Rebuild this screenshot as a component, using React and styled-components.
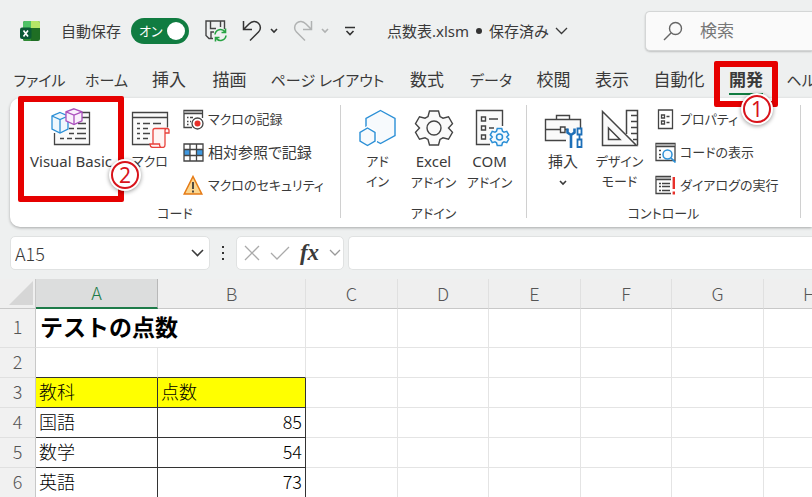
import React from 'react'
import styled, { createGlobalStyle } from 'styled-components'

const tabs = [
  { label: 'ファイル', width: 71, kana: true },
  { label: 'ホーム', width: 63, kana: true },
  { label: '挿入', width: 62 },
  { label: '描画', width: 59 },
  { label: 'ページ レイアウト', width: 137, kana: true },
  { label: '数式', width: 62 },
  { label: 'データ', width: 66, kana: true },
  { label: '校閲', width: 59 },
  { label: '表示', width: 58 },
  { label: '自動化', width: 76 },
  { label: '開発', width: 58, active: true, step: 1 },
  { label: 'ヘルプ', width: 66, kana: true },
]

const columns = [
  { name: 'A', width: 122 },
  { name: 'B', width: 148 },
  { name: 'C', width: 92 },
  { name: 'D', width: 91 },
  { name: 'E', width: 92 },
  { name: 'F', width: 91 },
  { name: 'G', width: 92 },
  { name: 'H', width: 92 },
]

const scores = [
  { subject: '国語', score: 85 },
  { subject: '数学', score: 54 },
  { subject: '英語', score: 73 },
]

function App() {
  return (
    <Page>
      <GlobalStyle />
      <TitleBar />
      <Tabs>
        {tabs.map((tab) => (
          <Tab key={tab.label} $width={tab.width} $active={tab.active} $kana={tab.kana}>
            <span>{tab.label}</span>
            {tab.step && (
              <TabCallout>
                <Badge>{tab.step}</Badge>
              </TabCallout>
            )}
          </Tab>
        ))}
      </Tabs>
      <Ribbon />
      <FormulaBar />
      <Sheet />
    </Page>
  )
}

export default App

function TitleBar() {
  return (
    <Header>
      <ExcelLogo />
      <AutoSave>
        自動保存
        <Switch type='checkbox' role='switch' defaultChecked />
        <Track>
          オン
          <Knob />
        </Track>
      </AutoSave>
      <QuickTools>
        <PlainButton aria-label='保存'>
          <SaveIcon />
        </PlainButton>
        <SplitButton aria-label='元に戻す'>
          <UndoIcon />
          <Chevron size={8} weight={1.6} />
        </SplitButton>
        <SplitButton aria-label='やり直し' $muted>
          <UndoIcon flip />
          <Chevron size={8} weight={1.6} />
        </SplitButton>
        <PlainButton aria-label='クイック アクセス ツール バーのカスタマイズ'>
          <svg width='12' height='12' fill='none' stroke='#333' strokeWidth='1.6'>
            <path d='M1 2.5h10M2.5 6L6 9.5 9.5 6' />
          </svg>
        </PlainButton>
      </QuickTools>
      <FileName>
        <span>点数表.xlsm</span>
        <Dot />
        <span>保存済み</span>
        <Chevron size={13} />
      </FileName>
      <SearchBox>
        <svg width='20' height='20' fill='none' stroke='#666' strokeWidth='1.4'>
          <circle cx='12.5' cy='7.5' r='6' />
          <path d='M8 12l-7 7' />
        </svg>
        <SearchInput type='search' placeholder='検索' aria-label='検索' />
      </SearchBox>
    </Header>
  )
}

function Ribbon() {
  return (
    <RibbonPanel>
      <Group $width={330}>
        <Tools>
          <BigButton $width={122}>
            <VisualBasicIcon />
            Visual Basic
            <ButtonCallout>
              <Badge>2</Badge>
            </ButtonCallout>
          </BigButton>
          <BigButton $width={36} $kana>
            <MacroIcon />
            マクロ
          </BigButton>
          <List>
            <SmallButton $kana>
              <RecordIcon />
              マクロの記録
            </SmallButton>
            <SmallButton>
              <RelativeIcon />
              相対参照で記録
            </SmallButton>
            <SmallButton $kana>
              <WarningIcon />
              マクロのセキュリティ
            </SmallButton>
          </List>
        </Tools>
        <GroupName>コード</GroupName>
      </Group>
      <Divider />
      <Group $width={185}>
        <Tools $center>
          <BigButton $width={56} $kana>
            <AddinIcon />
            <span>
              アド
              <br />
              イン
            </span>
          </BigButton>
          <BigButton $width={56}>
            <GearIcon />
            <span>
              Excel
              <br />
              <Kana>アドイン</Kana>
            </span>
          </BigButton>
          <BigButton $width={56}>
            <ComIcon />
            <span>
              COM
              <br />
              <Kana>アドイン</Kana>
            </span>
          </BigButton>
        </Tools>
        <GroupName>アドイン</GroupName>
      </Group>
      <Divider />
      <Group $width={273}>
        <Tools>
          <BigButton $width={72}>
            <InsertIcon />
            <span>
              挿入
              <br />
              <Chevron size={8} weight={1.6} />
            </span>
          </BigButton>
          <BigButton $width={41} $kana>
            <DesignIcon />
            <span>
              デザイン
              <br />
              モード
            </span>
          </BigButton>
          <List>
            <SmallButton $kana>
              <PropertyIcon />
              プロパティ
            </SmallButton>
            <SmallButton $kana>
              <CodeIcon />
              コードの表示
            </SmallButton>
            <SmallButton $kana>
              <DialogIcon />
              ダイアログの実行
            </SmallButton>
          </List>
        </Tools>
        <GroupName>コントロール</GroupName>
      </Group>
      <Divider />
    </RibbonPanel>
  )
}

function FormulaBar() {
  return (
    <Bar>
      <NameBox>
        <NameInput defaultValue='A15' aria-label='名前ボックス' />
        <PlainButton aria-label='名前の一覧'>
          <Chevron size={13} weight={1.6} />
        </PlainButton>
      </NameBox>
      <svg width='26' height='16' fill='#333'>
        <path d='M12 1h2v2h-2zM12 7h2v2h-2zM12 13h2v2h-2z' />
      </svg>
      <FormulaTools>
        <PlainButton aria-label='キャンセル'>
          <svg width='16' height='16' fill='none' stroke='#aaa' strokeWidth='1.3'>
            <path d='M1 1l14 14M15 1L1 15' />
          </svg>
        </PlainButton>
        <PlainButton aria-label='入力'>
          <svg width='20' height='16' fill='none' stroke='#aaa' strokeWidth='1.3'>
            <path d='M1 8l6 6L19 2' />
          </svg>
        </PlainButton>
        <FxButton aria-label='関数の挿入'>fx</FxButton>
        <Muted>
          <Chevron size={12} />
        </Muted>
      </FormulaTools>
      <FormulaInput aria-label='数式バー' />
    </Bar>
  )
}

function Sheet() {
  const rest = columns.slice(2)
  const blanks = rest.map((c) => <Cell key={c.name} />)

  return (
    <SheetArea>
      <Table>
        <colgroup>
          <Col $width={36} />
          {columns.map((c) => (
            <Col key={c.name} $width={c.width} />
          ))}
        </colgroup>
        <thead>
          <tr>
            <Corner aria-label='すべて選択'>
              <svg width='25' height='25' fill='#d6d6d6'>
                <path d='M24 0v24H0z' />
              </svg>
            </Corner>
            {columns.map((c) => (
              <ColumnHead key={c.name} scope='col' $selected={c.name === 'A'}>
                {c.name}
              </ColumnHead>
            ))}
          </tr>
        </thead>
        <tbody>
          <Row $height={39}>
            <RowHead scope='row'>1</RowHead>
            <TitleCell colSpan={2}>テストの点数</TitleCell>
            {blanks}
          </Row>
          <Row $height={30}>
            <RowHead scope='row'>2</RowHead>
            <Cell $above />
            <Cell $above />
            {blanks}
          </Row>
          <Row $height={30}>
            <RowHead scope='row'>3</RowHead>
            <Cell $boxed $fill>教科</Cell>
            <Cell $boxed $fill>点数</Cell>
            {blanks}
          </Row>
          {scores.map((row, i) => (
            <Row key={row.subject} $height={30}>
              <RowHead scope='row'>{i + 4}</RowHead>
              <Cell $boxed>{row.subject}</Cell>
              <Cell $boxed $number>{row.score}</Cell>
              {blanks}
            </Row>
          ))}
        </tbody>
      </Table>
    </SheetArea>
  )
}

// Icons

function Chevron({ size, weight = 1.3 }) {
  const h = size / 2
  return (
    <svg width={size} height={h + 2} fill='none' stroke='currentColor' strokeWidth={weight}>
      <path d={`M1 1l${h - 1} ${h - 1}l${h - 1} ${1 - h}`} />
    </svg>
  )
}

function ExcelLogo() {
  return (
    <svg width='20' height='20' role='img' aria-label='Excel'>
      <rect x='3' width='17' height='20' rx='2' fill='#1f6e24' />
      <path d='M5 0h6v7H3V2a2 2 0 0 1 2-2z' fill='#4fc267' />
      <path d='M11 0h7a2 2 0 0 1 2 2v5h-9z' fill='#b5e667' />
      <path d='M3 7h8v13H5a2 2 0 0 1-2-2z' fill='#2f8b34' />
      <rect y='6.5' width='11.5' height='11.5' rx='2' fill='#0b5a35' />
      <path d='M3.5 9.5l4.5 6M8 9.5l-4.5 6' stroke='#fff' strokeWidth='1.7' />
    </svg>
  )
}

function SaveIcon() {
  return (
    <svg width='22' height='22' fill='none' stroke='#444' strokeWidth='1.4'>
      <path d='M8 18.5H4L1 15.5V1h18.500v8M5.500 1v7.500H11M15.500 1v6M6 18v-6h3' />
      <g stroke='#27a343' strokeWidth='1.6'>
        <path d='M10 14.500a5.500 5.500 0 0 1 10-2.500M20.500 8.500v4h-4M21 15.500a5.500 5.500 0 0 1-10 2.500M10.500 21.500v-4h4' />
      </g>
    </svg>
  )
}

function UndoIcon({ flip }) {
  return (
    <svg width='20' height='22' fill='none' stroke='currentColor' strokeWidth='1.5'>
      <path
        transform={flip ? 'matrix(-1 0 0 1 20 0)' : undefined}
        d='M1.5 1v8.500H10M1.500 9.500L7 4C10 1 14 .8 16.500 3.300S19 9.500 16.500 12L8 20.500'
      />
    </svg>
  )
}

function VisualBasicIcon() {
  return (
    <svg width='40' height='40' fill='none' stroke='#444' strokeWidth='1.3'>
      <path d='M3.5 5h35v31h-35z' fill='#fafafa' stroke='none' />
      <path d='M31 4.5h7.500v32h-35V25M31 9.500h7.500' />
      <path d='M27 15.500h8M18 20.500h5M26 20.500h9M18 25.500h5M26 25.500h9M9 30.500h4M16 30.500h5M24 30.500h11' />
      <path d='M9 4.500l8 3.500v13l-8 4-8-4V8z' fill='#eef7fd' stroke='#2b8fd6' />
      <path d='M1 8l8 3.500L17 8M9 11.500V25' stroke='#2b8fd6' />
      <path d='M23 .8l8 3v9l-8 3.700-8-3.700v-9z' fill='#faf0fc' stroke='#ab50bd' />
      <path d='M15 3.800l8 3.200 8-3.200M23 7v9.500' stroke='#ab50bd' />
    </svg>
  )
}

function MacroIcon() {
  return (
    <svg width='40' height='40' fill='none' stroke='#444' strokeWidth='1.3'>
      <path d='M20 36.5H2.500v-32h35v15M2.500 9.500h35' fill='#fafafa' />
      <path d='M7 15.500h3M13 15.500h7M23 15.500h8M7 20.500h3M13 20.500h5M7 25.500h3M13 25.500h7M7 30.500h3M13 30.500h5' />
      <path
        d='M23 36V22.500q0-2 2-2h12q2 0 2 2V25h-4v12q0 2.500-2.500 2.500h-10Q20 39 20 36h9.500q0 3.500 3 3.500M35 25v-2.500q0-2 2-2'
        fill='#fff5f4'
        stroke='#e8423c'
      />
    </svg>
  )
}

function RecordIcon() {
  return (
    <svg width='21' height='21' fill='none' stroke='#444' strokeWidth='1.3'>
      <path d='M9 18.500H1v-17h18.500V9M1 4.500h18.500' />
      <path d='M1.500 2h17.500v2H1.500z' fill='#aaa' stroke='none' />
      <path d='M4 8.500h1.500M7 8.500h3M4 12.500h1.500M7 12.500h1M4 15.500h1.500' />
      <circle cx='14.5' cy='14.5' r='5.5' fill='#fff' />
      <circle cx='14.5' cy='14.5' r='3' fill='#e8312b' stroke='none' />
    </svg>
  )
}

function RelativeIcon() {
  return (
    <svg width='21' height='19' fill='none' stroke='#444' strokeWidth='1.3'>
      <path d='M1 6.500h6v6H1zM14 6.500h6v6h-6z' fill='#3f98e0' stroke='none' />
      <path d='M1 1h19v17H1zM1 6.500h19M1 12.500h19M7 1v17M13.500 1v17' />
    </svg>
  )
}

function WarningIcon() {
  return (
    <svg width='21' height='21' fill='none'>
      <path d='M10 1.500l8.800 17.500H1.200z' fill='#fbd58e' stroke='#e57a14' strokeWidth='1.5' />
      <path d='M10 7v7M10 15.500v2' stroke='#333' strokeWidth='1.7' />
    </svg>
  )
}

function AddinIcon() {
  return (
    <svg width='40' height='40' fill='#f7fafd' stroke='#2b8fd6' strokeWidth='1.4'>
      <path d='M22.500 2.500l14.500 8v17l-14.500 8L8 27.500v-17z' />
      <path d='M9.500 20l7.500 4.500v8.500l-7.500 4.500L2 33v-8.500z' stroke='#fff' strokeWidth='4' />
      <path d='M9.500 20l7.500 4.500v8.500l-7.500 4.500L2 33v-8.500z' />
    </svg>
  )
}

const gearPath =
  'M15.500 3h9l1.500 5.500 3 1.700 5.500-1.500 4 7-4 4.300 4 4.300-4 7-5.500-1.500-3 1.700-1.500 5.500h-9L14 31.500l-3-1.700-5.500 1.500-4-7 4-4.300-4-4.300 4-7 5.500 1.500 3-1.700z'

function GearIcon() {
  return (
    <svg width='40' height='40' fill='#fafafa' stroke='#444' strokeWidth='1.4'>
      <path d={gearPath} />
      <circle cx='20' cy='20' r='7' />
    </svg>
  )
}

function ComIcon() {
  return (
    <svg width='40' height='40' fill='none' stroke='#444' strokeWidth='1.4'>
      <path d='M20 36.500H6.500V2.500h26V18' fill='#fafafa' />
      <path d='M11.500 9h4v4h-4zM11.500 18h4v4h-4zM11.500 27h4v4h-4zM19 11h9M19 20h5' />
      <g transform='translate(19.5 19) scale(.5)' stroke='#2b8fd6' strokeWidth='3' fill='#f3f9fe'>
        <path d={gearPath} />
        <circle cx='20' cy='20' r='6' />
      </g>
    </svg>
  )
}

function InsertIcon() {
  return (
    <svg width='40' height='40' fill='none' stroke='#444' strokeWidth='1.4'>
      <path d='M23 32.500H2.500v-21h35V20' fill='#fafafa' />
      <path d='M2.500 21.500h15M22 21.500h3M13.500 11V7.500h13V11M17.500 19h4.500v5.500h-4.500z' />
      <path d='M24.500 20.500v4l3.500 2.500 3.500-2.500v-4M28 27v13' stroke='#1d6fb8' strokeWidth='2.6' />
      <path d='M34.500 20.500h4v6h-4zM34.500 31.500h4V39h-4zM36.500 27v5' stroke='#1d6fb8' strokeWidth='1.8' />
    </svg>
  )
}

function DesignIcon() {
  return (
    <svg width='40' height='40' fill='none' stroke='#444' strokeWidth='1.5'>
      <path d='M26.500 26V2.500H37.500V37.500M31 7.500h6M31 13.500h6M31 19.500h6M31 25.500h6M33 31.500h4' />
      <path d='M2.500 3.500v34h34z' fill='#fafafa' />
      <path d='M8.500 20v11.500H20z' fill='#fff' />
    </svg>
  )
}

function PropertyIcon() {
  return (
    <svg width='21' height='21' fill='none' stroke='#444' strokeWidth='1.3'>
      <path d='M3.500 1h14v18.500h-14z' />
      <path d='M6.500 6h3v3h-3zM6.500 12h3v3h-3zM11.500 7.500h3M11.500 13.500h3' />
    </svg>
  )
}

function CodeIcon() {
  return (
    <svg width='21' height='21' fill='none' stroke='#444' strokeWidth='1.3'>
      <path d='M1 1.500h19v17H1zM1 4.500h19' />
      <path d='M1.500 2h18v2h-18z' fill='#aaa' stroke='none' />
      <path d='M4 8.500h2M4 12.500h2M4 15.500h2' />
      <circle cx='12.5' cy='12.5' r='4.5' fill='#f3f9fe' stroke='#2b8fd6' strokeWidth='1.5' />
      <path d='M16 16l4.500 4.500' stroke='#2b8fd6' strokeWidth='1.7' />
    </svg>
  )
}

function DialogIcon() {
  return (
    <svg width='21' height='21' fill='none' stroke='#444' strokeWidth='1.3'>
      <path d='M16 18.500H1v-17h15M1 4.500h15' />
      <path d='M1.500 2H16v2H1.500z' fill='#aaa' stroke='none' />
      <path d='M4 8.500h2M7 8.500h8M4 11.500h2M7 11.500h8M4 15.500h2M7 15.500h8' />
      <path d='M18.800 2v12M18.800 16.500v3' stroke='#e8312b' strokeWidth='2.4' />
    </svg>
  )
}

// Styles

const GlobalStyle = createGlobalStyle`
  * {
    box-sizing: border-box;
  }

  body {
    margin: 0;
    overflow-x: hidden;
    background: #eef0f0;
    color: #3a3a3a;
    font-family: 'Noto Sans', 'Noto Sans CJK JP', sans-serif;
    font-size: 15px;
    line-height: 20px;
  }

  button,
  input {
    border: 0;
    padding: 0;
    background: none;
    color: inherit;
    font: inherit;
  }

  svg {
    flex-shrink: 0;
    vertical-align: middle;
  }
`
const Page = styled.div`
  min-height: 100vh;
  display: flex;
  flex-direction: column;
  overflow: hidden;
`
const Header = styled.header`
  display: flex;
  align-items: center;
  height: 62px;
  padding-left: 20px;
  white-space: nowrap;
`
const AutoSave = styled.label`
  display: flex;
  align-items: center;
  gap: 10px;
  margin-left: 21px;
`
const Switch = styled.input`
  appearance: none;
  width: 0;
  height: 0;
  margin: 0 -10px 0 0;
`
const Track = styled.span`
  display: flex;
  align-items: center;
  justify-content: space-between;
  width: 58px;
  height: 26px;
  padding: 0 4px 0 8px;
  border-radius: 13px;
  background: #107c41;
  color: #fff;
  font-size: 13px;
  font-feature-settings: 'palt';
`
const Knob = styled.span`
  width: 18px;
  height: 18px;
  border-radius: 50%;
  background: #fff;
`
const QuickTools = styled.div`
  display: flex;
  align-items: center;
  gap: 15px;
  margin-left: 16px;
`
const PlainButton = styled.button`
  display: flex;
  align-items: center;
`
const SplitButton = styled(PlainButton)`
  gap: 8px;
  color: ${(props) => (props.$muted ? '#b0b2b2' : '#333')};
`
const FileName = styled.div`
  display: flex;
  align-items: center;
  gap: 6px;
  margin-left: 31px;
`
const Dot = styled.span`
  width: 6px;
  height: 6px;
  margin: 0 1px;
  border-radius: 50%;
  background: #333;
`
const SearchBox = styled.div`
  display: flex;
  align-items: center;
  flex: 1;
  gap: 17px;
  min-width: 160px;
  max-width: 167px;
  height: 40px;
  margin-left: auto;
  padding-left: 17px;
  border: 1px solid #d4d6d6;
  border-right: 0;
  border-radius: 5px 0 0 5px;
  background: #fafafa;
  box-shadow: 0 1px 2px rgba(0, 0, 0, 0.2);
`
const SearchInput = styled.input`
  width: 100%;
  font-size: 17px;
  outline: none;

  &::placeholder {
    color: #777;
    opacity: 1;
  }
`
const Tabs = styled.nav`
  display: flex;
  height: 36px;
  padding-left: 4px;
`
const Tab = styled.button`
  position: relative;
  flex: none;
  width: ${(props) => props.$width}px;
  height: 36px;
  font-size: ${(props) => (props.$kana ? 15 : 17)}px;
  font-weight: ${(props) => (props.$active ? 700 : 400)};
  font-feature-settings: 'palt';
  white-space: nowrap;

  > span {
    padding-bottom: 2px;
    border-bottom: ${(props) => (props.$active ? '2px solid #107c41' : '0')};
  }
`
const Callout = styled.div`
  position: absolute;
  border: 6px solid #e60000;
  border-radius: 2px;
  z-index: 1;
  pointer-events: none;
`
const TabCallout = styled(Callout)`
  top: -1px;
  left: -3px;
  width: 64px;
  height: 46px;
`
const ButtonCallout = styled(Callout)`
  top: -8px;
  left: 8px;
  width: 106px;
  height: 106px;
`
const Badge = styled.span`
  position: absolute;
  right: -21px;
  bottom: 7px;
  width: 28px;
  height: 28px;
  border: 2px solid #d8131b;
  border-radius: 50%;
  background: #fff;
  box-shadow: 0 0 0 2px #fff, 0 1px 4px 2px rgba(0, 0, 0, 0.4);
  color: #d8131b;
  font-size: 21px;
  font-weight: 400;
  line-height: 24px;
  text-align: center;

  ${TabCallout} & {
    right: 1px;
    bottom: -22px;
  }
`
const RibbonPanel = styled.section`
  display: flex;
  margin-left: 10px;
  border-radius: 10px 0 0 10px;
  background: #fff;
  box-shadow: 0 1px 3px rgba(0, 0, 0, 0.3);
`
const Group = styled.div`
  flex: none;
  width: ${(props) => props.$width}px;
  padding: 6px 0 4px;
`
const Tools = styled.div`
  display: flex;
  justify-content: ${(props) => (props.$center ? 'center' : 'flex-start')};
  height: 99px;
`
const BigButton = styled.button`
  position: relative;
  display: flex;
  flex-direction: column;
  align-items: center;
  gap: 3px;
  flex: none;
  width: ${(props) => props.$width}px;
  padding-top: 4px;
  font-size: ${(props) => (props.$kana ? 13 : 15)}px;
  font-feature-settings: 'palt';
  line-height: 20px;
  white-space: nowrap;
`
const Kana = styled.span`
  font-size: 13px;
`
const List = styled.div`
  margin-left: 15px;
`
const SmallButton = styled.button`
  display: flex;
  align-items: center;
  gap: 4px;
  height: 33px;
  padding-bottom: 3px;
  font-size: ${(props) => (props.$kana ? 13 : 15)}px;
  font-feature-settings: 'palt';
  white-space: nowrap;
`
const GroupName = styled.div`
  font-size: 13px;
  font-feature-settings: 'palt';
  text-align: center;
`
const Divider = styled.div`
  width: 1px;
  margin: 7px 0 9px;
  background: #d0d0d0;
`
const Bar = styled.div`
  display: flex;
  align-items: center;
  height: 52px;
  padding-left: 10px;
`
const Field = styled.div`
  display: flex;
  align-items: center;
  height: 34px;
  border: 1px solid #e0e2e2;
  border-radius: 5px;
  background: #fff;
`
const NameBox = styled(Field)`
  width: 200px;
  padding: 0 5px 0 4px;
`
const NameInput = styled.input`
  flex: 1;
  min-width: 0;
  font-family: 'Noto Sans CJK JP', sans-serif;
  font-size: 18px;
  font-weight: 300;
  outline: none;
`
const FormulaTools = styled(Field)`
  justify-content: space-between;
  width: 108px;
  padding: 0 2px 0 7px;
`
const FxButton = styled.button`
  font-family: 'Liberation Serif', serif;
  font-size: 23px;
  font-style: italic;
  font-weight: 700;
`
const Muted = styled.span`
  display: flex;
  color: #999;
`
const FormulaInput = styled.input`
  flex: 1;
  height: 34px;
  margin-left: 4px;
  border: 1px solid #e0e2e2;
  border-right: 0;
  border-radius: 5px 0 0 5px;
  background: #fff;
`
const SheetArea = styled.main`
  flex: 1;
  overflow: hidden;
  background: #fff;
`
const Table = styled.table`
  width: 100%;
  border-spacing: 0;
  table-layout: fixed;
  font-family: 'Noto Sans CJK JP', sans-serif;
  font-size: 18px;
  font-weight: 300;
  line-height: 24px;
`
const Col = styled.col`
  width: ${(props) => props.$width}px;
`
const Corner = styled.td`
  height: 30px;
  padding: 0 1px 2px 0;
  border-right: 1px solid #c8c8c8;
  border-bottom: 1px solid #c8c8c8;
  background: #efefef;
  text-align: right;
  vertical-align: bottom;
  line-height: 0;
`
const ColumnHead = styled.th`
  padding: 0 0 2px;
  border-right: 1px solid ${(props) => (props.$selected ? '#b8b8b8' : '#e0e0e0')};
  border-bottom: ${(props) => (props.$selected ? '2px solid #1e7b49' : '1px solid #c8c8c8')};
  background: ${(props) => (props.$selected ? '#dcdddd' : '#efefef')};
  color: ${(props) => (props.$selected ? '#1e7b49' : '#555')};
  font-weight: 300;
`
const Row = styled.tr`
  height: ${(props) => props.$height}px;
`
const RowHead = styled.th`
  padding: 0 0 4px;
  border-right: 1px solid #c8c8c8;
  border-bottom: 1px solid #e0e0e0;
  background: #f1f1f1;
  color: #555;
  font-weight: 300;
`
const Cell = styled.td`
  padding: 0 3px 4px;
  border-right: 1px solid ${(props) => (props.$boxed ? '#333' : '#e4e4e4')};
  border-bottom: 1px solid ${(props) => (props.$boxed || props.$above ? '#333' : '#e4e4e4')};
  background: ${(props) => (props.$fill ? '#ff0' : '#fff')};
  color: #000;
  text-align: ${(props) => (props.$number ? 'right' : 'left')};
`
const TitleCell = styled(Cell)`
  padding: 0 4px 4px;
  font-size: 23px;
  font-weight: 700;
`
